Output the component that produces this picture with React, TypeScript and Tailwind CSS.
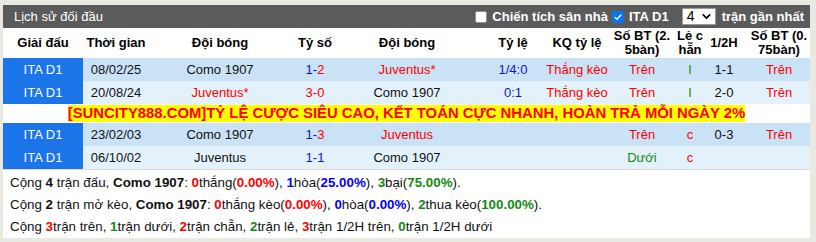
import { ChevronDown } from "lucide-react";

type Part = { t: string; c?: string };

interface MatchRow {
  date: string;
  home: Part;
  score: Part[];
  away: Part;
  odds: string;
  result: string;
  over: Part;
  oddEven: Part;
  half: string;
  over2: Part;
}

const RED = "text-[#ff0000]";
const BLUE = "text-[#1515b8]";
const GREEN = "text-[#138a13]";

const rows: MatchRow[] = [
  {
    date: "08/02/25",
    home: { t: "Como 1907" },
    score: [{ t: "1-", c: BLUE }, { t: "2", c: RED }],
    away: { t: "Juventus*", c: RED },
    odds: "1/4:0",
    result: "Thắng kèo",
    over: { t: "Trên", c: RED },
    oddEven: { t: "l", c: GREEN },
    half: "1-1",
    over2: { t: "Trên", c: RED },
  },
  {
    date: "20/08/24",
    home: { t: "Juventus*", c: RED },
    score: [{ t: "3-0", c: RED }],
    away: { t: "Como 1907" },
    odds: "0:1",
    result: "Thắng kèo",
    over: { t: "Trên", c: RED },
    oddEven: { t: "l", c: GREEN },
    half: "2-0",
    over2: { t: "Trên", c: RED },
  },
  {
    date: "23/02/03",
    home: { t: "Como 1907" },
    score: [{ t: "1-", c: BLUE }, { t: "3", c: RED }],
    away: { t: "Juventus", c: RED },
    odds: "",
    result: "",
    over: { t: "Trên", c: RED },
    oddEven: { t: "c", c: RED },
    half: "0-3",
    over2: { t: "Trên", c: RED },
  },
  {
    date: "06/10/02",
    home: { t: "Juventus" },
    score: [{ t: "1-1", c: BLUE }],
    away: { t: "Como 1907" },
    odds: "",
    result: "",
    over: { t: "Dưới", c: GREEN },
    oddEven: { t: "c", c: RED },
    half: "",
    over2: { t: "", c: RED },
  },
];

const grid =
  "grid grid-cols-[80px_66px_142px_48px_136px_76px_52px_78px_18px_50px_60px]";

function Cell({ children, className = "" }: { children?: React.ReactNode; className?: string }) {
  return (
    <div className={`flex items-center justify-center whitespace-nowrap ${className}`}>
      {children}
    </div>
  );
}

function Row({ r, dark }: { r: MatchRow; dark: boolean }) {
  return (
    <div className={`${grid} h-[23px] ${dark ? "bg-[#c9e2f6]" : "bg-[#e3f1fb]"}`}>
      <Cell className="bg-[#1b74e8] text-white">ITA D1</Cell>
      <Cell>{r.date}</Cell>
      <Cell className={r.home.c}>{r.home.t}</Cell>
      <Cell>
        {r.score.map((p, i) => (
          <span key={i} className={p.c}>
            {p.t}
          </span>
        ))}
      </Cell>
      <Cell className={r.away.c}>{r.away.t}</Cell>
      <Cell className={BLUE}>{r.odds}</Cell>
      <Cell className={RED}>{r.result}</Cell>
      <Cell className={r.over.c}>{r.over.t}</Cell>
      <Cell className={r.oddEven.c}>{r.oddEven.t}</Cell>
      <Cell>{r.half}</Cell>
      <Cell className={r.over2.c}>{r.over2.t}</Cell>
    </div>
  );
}

function B({ c, children }: { c?: string; children: React.ReactNode }) {
  return <b className={c}>{children}</b>;
}

export default function App() {
  return (
    <div className="w-[816px] h-[242px] bg-[#e9e8e1] pt-[5px] pl-[3px] font-['Liberation_Sans',Arial,sans-serif] text-[13px] text-[#111]">
      <div className="w-[807px] bg-white">
        {/* title bar */}
        <div className="h-[23px] bg-[#5b5b5b] text-white flex items-center justify-between pl-[11px] pr-[6px]">
          <span>Lịch sử đối đầu</span>
          <div className="flex items-center font-bold">
            <span className="w-[12px] h-[12px] rounded-[2px] bg-white border border-[#8f8f8f] mr-[5px]" />
            <span>Chiến tích sân nhà</span>
            <span className="w-[12px] h-[12px] rounded-[2px] bg-[#0b75f0] ml-[4px] mr-[5px] flex items-center justify-center">
              <svg viewBox="0 0 12 12" className="w-[10px] h-[10px]">
                <path d="M2.2 6.2 4.8 8.7 9.8 3.2" fill="none" stroke="white" strokeWidth="1.8" />
              </svg>
            </span>
            <span>ITA D1</span>
            <span className="ml-[13px] mr-[6px] w-[34px] h-[17px] bg-white text-black font-normal text-[14px] flex items-center justify-between pl-[4px] pr-[2px] border border-[#999]">
              4
              <ChevronDown size={13} strokeWidth={3} />
            </span>
            <span>trận gần nhất</span>
          </div>
        </div>

        {/* header */}
        <div className={`${grid} h-[30px] font-bold text-black leading-[14px]`}>
          <Cell>Giải đấu</Cell>
          <Cell>Thời gian</Cell>
          <Cell>Đội bóng</Cell>
          <Cell>Tỷ số</Cell>
          <Cell>Đội bóng</Cell>
          <Cell>Tỷ lệ</Cell>
          <Cell>KQ tỷ lệ</Cell>
          <Cell className="text-center">
            Số BT (2.
            <br />
            5bàn)
          </Cell>
          <Cell className="text-center">
            Lẻ c
            <br />
            hẵn
          </Cell>
          <Cell>1/2H</Cell>
          <Cell className="text-center">
            Số BT (0.
            <br />
            75bàn)
          </Cell>
        </div>

        <Row r={rows[0]} dark />
        <Row r={rows[1]} dark={false} />
        <div className="h-[19px] flex items-center justify-center">
          <span className="bg-[#ffff00] text-[#ff0000] font-bold text-[14.85px] leading-[17px]">
            [SUNCITY888.COM]TỶ LỆ CƯỢC SIÊU CAO, KẾT TOÁN CỰC NHANH, HOÀN TRẢ MỖI NGÀY 2%
          </span>
        </div>
        <Row r={rows[2]} dark />
        <Row r={rows[3]} dark={false} />

        {/* summary */}
        <div className="border-t border-[#dcdcdc] pt-[2px] pl-[7px] leading-[22px] h-[69px] text-[13.33px]">
          <div>
            Cộng <B>4</B> trận đấu, <B>Como 1907</B>: <B c={RED}>0</B>thắng(<B c={RED}>0.00%</B>),{" "}
            <B c="text-[#0000ff]">1</B>hòa(<B c="text-[#0000ff]">25.00%</B>), <B c={GREEN}>3</B>bại(
            <B c={GREEN}>75.00%</B>).
          </div>
          <div>
            Cộng <B>2</B> trận mở kèo, <B>Como 1907</B>: <B c={RED}>0</B>thắng kèo(<B c={RED}>0.00%</B>),{" "}
            <B c="text-[#0000ff]">0</B>hòa(<B c="text-[#0000ff]">0.00%</B>), <B c={GREEN}>2</B>thua kèo(
            <B c={GREEN}>100.00%</B>).
          </div>
          <div>
            Cộng <B c={RED}>3</B>trận trên, <B c={GREEN}>1</B>trận dưới, <B c={RED}>2</B>trận chẵn,{" "}
            <B c={GREEN}>2</B>trận lẻ, <B c={RED}>3</B>trận 1/2H trên, <B c={GREEN}>0</B>trận 1/2H dưới
          </div>
        </div>
      </div>
    </div>
  );
}
